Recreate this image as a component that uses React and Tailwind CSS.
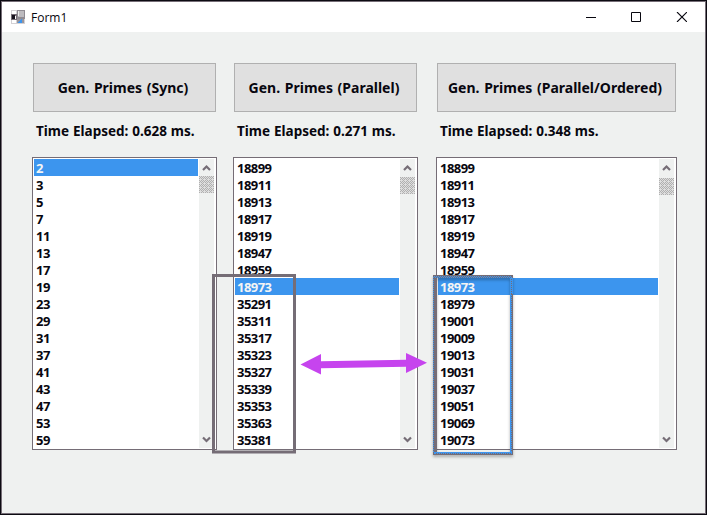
const syncPrimes = [2, 3, 5, 7, 11, 13, 17, 19, 23, 29, 31, 37, 41, 43, 47, 53, 59];
const parallelPrimes = [18899, 18911, 18913, 18917, 18919, 18947, 18959, 18973, 35291, 35311, 35317, 35323, 35327, 35339, 35353, 35363, 35381];
const orderedPrimes = [18899, 18911, 18913, 18917, 18919, 18947, 18959, 18973, 18979, 19001, 19009, 19013, 19031, 19037, 19051, 19069, 19073];

function AppIcon() {
  return (
    <svg width="14" height="14" viewBox="0 0 14 14" className="shrink-0" shapeRendering="crispEdges">
      <path d="M0 0h14v14H0z" fill="#d3d1d5" />
      <path d="M1 1h4v3H1zM1 10h4v3H1z" fill="#fff" />
      <path d="M0 4h6v6H0z" fill="#756d76" />
      <path d="M1 5h3v4H1z" fill="#15111c" />
      <path d="M4 6h1v3H4z" fill="#fff" />
      <path d="M6 0h8v9H6z" fill="#8f8b92" />
      <path d="M7 1h6v6H7z" fill="#bdbbbf" />
      <path d="M7 1h1v5H7z" fill="#ececec" />
      <path d="M6 9h7v4H6z" fill="#99959c" />
      <path d="M10 9h1v4H7v-1h1v-1h1v-1h1z" fill="#3c95ee" />
    </svg>
  );
}

function Chevron({ down }) {
  return (
    <svg width="15" height="17" viewBox="0 0 15 17" className="block shrink-0" fill="none" stroke="#756d76" strokeWidth="2.2">
      <path d={down ? "M4 6.5l3.5 3.5L11 6.5" : "M4 11l3.5-3.5L11 11"} />
    </svg>
  );
}

function Thumb({ id, className }) {
  return (
    <svg width="15" height="17" className={`block ${className}`} shapeRendering="crispEdges">
      <defs>
        <pattern id={id} width="4" height="4" patternUnits="userSpaceOnUse">
          <path d="M0 0h4v4H0z" fill="#dedede" />
          <path d="M0 0h1v1H0zM2 0h1v1H2zM1 1h1v1H1zM0 2h1v1H0zM2 2h1v1H2zM3 3h1v1H3zM3 1h1v1H3z" fill="#b0b0b0" />
        </pattern>
      </defs>
      <path d="M0 0h15v17H0z" fill={`url(#${id})`} />
    </svg>
  );
}

function Panel({ id, title, time, items, selected, className, thumbClass }) {
  return (
    <section className={`flex flex-col ${className}`}>
      <button className="mx-px flex h-[49px] items-center justify-center border border-[#b0b0b0] bg-[#e0e0e0] pr-[3px] text-[14px] font-bold whitespace-nowrap [word-spacing:1px]">
        {title}
      </button>
      <p className="mt-[9px] ml-1 h-5 text-[13.5px] leading-5 font-bold whitespace-nowrap [word-spacing:0.4px]">
        {`Time Elapsed: ${time} ms.`}
      </p>
      <div className="mt-4 flex h-[293px] border border-[#756d76] bg-white pt-px pr-[2px] pl-px">
        <ul className="flex-1 pr-px text-[13px] leading-[19px] font-bold tracking-[-0.55px]">
          {items.map((n, i) => (
            <li key={n} className={`h-[17px] pl-[2px] ${i === selected ? "bg-[#3c95ee] text-[#f4f4f4]" : ""}`}>
              {n}
            </li>
          ))}
        </ul>
        <div className="flex h-[289px] w-[15px] flex-col justify-between bg-[#eff1f0]">
          <div>
            <Chevron />
            <Thumb id={id} className={thumbClass} />
          </div>
          <Chevron down />
        </div>
      </div>
    </section>
  );
}

function Annotations() {
  return (
    <svg className="pointer-events-none absolute top-0 left-0" width="707" height="515">
      <defs>
        <pattern id="dither" width="2" height="2" patternUnits="userSpaceOnUse">
          <path d="M0 0h2v2H0z" fill="#756d76" />
          <path d="M0 0h1v1H0zM1 1h1v1H1z" fill="#3c95ee" />
        </pattern>
        <filter id="shadow" x="-10%" y="-10%" width="120%" height="120%">
          <feDropShadow dx="0" dy="2" stdDeviation="1.5" floodColor="#000" floodOpacity="0.3" />
        </filter>
      </defs>
      <rect x="213.5" y="275.5" width="81" height="176.5" fill="none" stroke="#756d76" strokeWidth="3" />
      <g filter="url(#shadow)" shapeRendering="crispEdges">
        <path d="M433 275h80v180h-80zM437 278v174h73V278z" fill="#756d76" fillRule="evenodd" />
        <path d="M433 276h79v2h-79zM433 278h1v175h-1z" fill="url(#dither)" />
        <path d="M510 294h2v159h-2zM434 452h78v2h-78z" fill="#3c95ee" />
        <path d="M511 294h1v158h-1zM435 453h76v1h-76z" fill="url(#dither)" />
      </g>
      <path d="M510 278h3v16h-3z" fill="#3c95ee" />
      <path d="M511.5 279v15" stroke="#756d76" strokeDasharray="1 1" />
      <path d="M300.5 364.5L321 354v7.3l85-1.5V353l21 9.7L406 373v-6.2l-85 1.4v6.3z" fill="#c644ee" />
    </svg>
  );
}

export default function App() {
  return (
    <main className="relative h-[515px] w-[707px] overflow-hidden bg-[#eff1f0] font-['Noto_Sans','Open_Sans',sans-serif] text-[#08070f]">
      <div className="h-full border border-[#0c0a12]">
        <div className="h-full border border-[#756d76]">
          <header className="flex h-[30px] items-center bg-white pl-[9px]">
            <AppIcon />
            <span className="ml-[6px] pt-px text-[12px] font-['Open_Sans','Noto_Sans',sans-serif]">Form1</span>
            <svg width="101" height="10" viewBox="0 0 101 10" className="mr-[18px] mb-px ml-auto shrink-0" fill="none" stroke="#08070f">
              <path d="M0 5.5h10M45.5 .5h9v9h-9z" />
              <path d="M91 0l10 10M101 0L91 10" strokeWidth="1.1" />
            </svg>
          </header>
          <div className="flex pt-[31px] pl-[30px]">
            <Panel id="thumb-sync" className="w-[185px]" title="Gen. Primes (Sync)" time="0.628" items={syncPrimes} selected={0} thumbClass="" />
            <Panel id="thumb-parallel" className="ml-4 w-[185px]" title="Gen. Primes (Parallel)" time="0.271" items={parallelPrimes} selected={7} thumbClass="mt-px" />
            <Panel id="thumb-ordered" className="ml-[18px] w-[241px]" title="Gen. Primes (Parallel/Ordered)" time="0.348" items={orderedPrimes} selected={7} thumbClass="mt-[2px]" />
          </div>
        </div>
      </div>
      <Annotations />
    </main>
  );
}
